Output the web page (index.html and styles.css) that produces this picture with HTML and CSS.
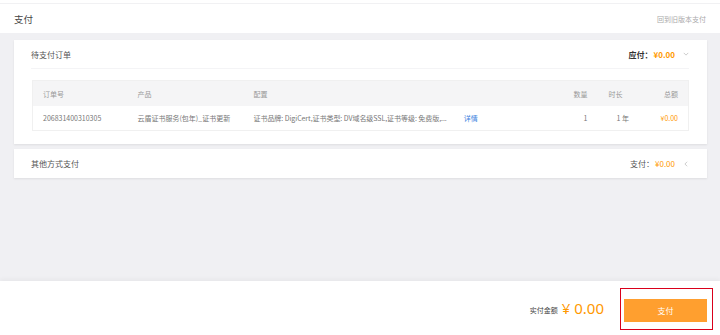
FILE: index.html
```html
<!DOCTYPE html>
<html lang="zh-CN">
<head>
    <meta charset="UTF-8">
    <meta name="viewport" content="width=device-width, initial-scale=1.0">
    <title>支付</title>
    <link rel="stylesheet" href="styles.css">
</head>
<body>
    <div class="top-strip"></div>
    <div class="page-header">
        <h1>支付</h1>
        <a class="old-link">回到旧版本支付</a>
    </div>

    <div class="main">
        <div class="card">
            <div class="card-head">
                <span class="card-title">待支付订单</span>
                <span class="card-sum strong">应付：<em>¥0.00</em>
                    <svg class="chev" viewBox="0 0 8 5"><path d="M1 1 L4 4 L7 1" fill="none" stroke="#bbb" stroke-width="1"/></svg>
                </span>
            </div>
            <table class="order-table">
                <colgroup>
                    <col style="width:105px">
                    <col style="width:116px">
                    <col style="width:307px">
                    <col style="width:30px">
                    <col style="width:50px">
                    <col style="width:48px">
                </colgroup>
                <thead>
                    <tr>
                        <th>订单号</th>
                        <th>产品</th>
                        <th>配置</th>
                        <th class="num">数量</th>
                        <th class="dur">时长</th>
                        <th class="total">总额</th>
                    </tr>
                </thead>
                <tbody>
                    <tr>
                        <td>206831400310305</td>
                        <td>云盾证书服务(包年)_证书更新</td>
                        <td><span class="config">证书品牌: DigiCert,证书类型: DV域名级SSL,证书等级: 免费版,...</span><a class="detail">详情</a></td>
                        <td class="num">1</td>
                        <td class="dur dur-val">1 年</td>
                        <td class="total price">¥0.00</td>
                    </tr>
                </tbody>
            </table>
        </div>

        <div class="card other">
            <div class="card-head">
                <span class="card-title">其他方式支付</span>
                <span class="card-sum">支付：<em>¥0.00</em>
                    <svg class="chev" viewBox="0 0 5 8"><path d="M4 1 L1 4 L4 7" fill="none" stroke="#bbb" stroke-width="1"/></svg>
                </span>
            </div>
        </div>
    </div>

    <div class="footer">
        <span class="pay-label">实付金额</span>
        <span class="pay-amount">¥ 0.00</span>
        <div class="pay-mark">
            <button class="pay-btn">支付</button>
        </div>
    </div>
</body>
</html>
```

FILE: styles.css
```css
body {
    margin: 0;
    font-family: "Noto Sans CJK SC", "Noto Sans", sans-serif;
    color: #333;
    background: #fff;
}
.top-strip {
    height: 3px;
    background: #fff;
    border-bottom: 1px solid #f1f1f3;
}
.page-header {
    height: 29px;
    display: flex;
    align-items: center;
    justify-content: space-between;
    padding: 0 14px;
}
.page-header h1 {
    margin: 0;
    font-size: 9.5px;
    font-weight: normal;
    color: #444;
}
.old-link {
    font-size: 7px;
    color: #aaa;
}
.main {
    height: 241px;
    padding: 7px 13px 0 14px;
    background: #f0f0f3;
}
.card {
    background: #fff;
    box-shadow: 0 1px 2px rgba(0, 0, 0, 0.08);
    padding-bottom: 13px;
}
.card.other {
    margin-top: 5px;
    padding-bottom: 0;
}
.card-head {
    height: 28px;
    margin: 0 18px 0 17px;
    display: flex;
    align-items: center;
    justify-content: space-between;
    border-bottom: 1px solid #f4f4f6;
}
.card.other .card-head {
    height: 29px;
    border-bottom: none;
}
.card-title {
    font-size: 8px;
    color: #555;
}
.card-sum {
    font-size: 8px;
    color: #555;
    display: flex;
    align-items: center;
}
.card-sum.strong {
    font-weight: bold;
    color: #333;
}
.card-sum em {
    font-style: normal;
    color: #f90;
    margin-left: 1px;
}
.chev {
    width: 6px;
    height: 6px;
    margin-left: 8px;
}
.order-table {
    margin: 11px 18px 0 18px;
    width: 656px;
    table-layout: fixed;
    border-collapse: collapse;
    font-size: 7px;
    border: 1px solid #f0f0f0;
}
.order-table th {
    height: 25px;
    padding: 0;
    text-align: left;
    font-weight: normal;
    color: #999;
    background: #f5f5f6;
}
.order-table td {
    height: 24px;
    padding: 0;
    color: #777;
    white-space: nowrap;
}
.order-table th:first-child,
.order-table td:first-child {
    padding-left: 10px;
}
.order-table .num {
    text-align: right;
    padding-right: 3px;
}
.order-table .dur {
    padding-left: 18px;
}
.order-table .dur-val {
    padding-left: 26px;
}
.order-table .total {
    text-align: right;
    padding-right: 10px;
}
.order-table .price {
    color: #f90;
}
.config {
    letter-spacing: -0.05px;
}
.detail {
    margin-left: 17px;
    color: #3d7fe0;
}
.footer {
    height: 54px;
    display: flex;
    align-items: center;
    justify-content: flex-end;
    padding-right: 7px;
    box-shadow: 0 -2px 4px rgba(0, 0, 0, 0.04);
}
.pay-label {
    font-size: 7px;
    color: #444;
    margin-top: 4px;
}
.pay-amount {
    font-size: 15px;
    color: #f90;
    margin: 0 16px 0 4px;
    font-family: "Noto Sans", "Noto Sans CJK SC", sans-serif;
}
.pay-mark {
    border: 1px solid #d9001b;
    padding: 10px 5px 7px 3px;
    margin-top: 2px;
}
.pay-btn {
    display: block;
    width: 83px;
    height: 23px;
    border: none;
    background: #ff9f2f;
    color: #fff;
    font-size: 8px;
    font-family: "Noto Sans CJK SC", sans-serif;
}
```
